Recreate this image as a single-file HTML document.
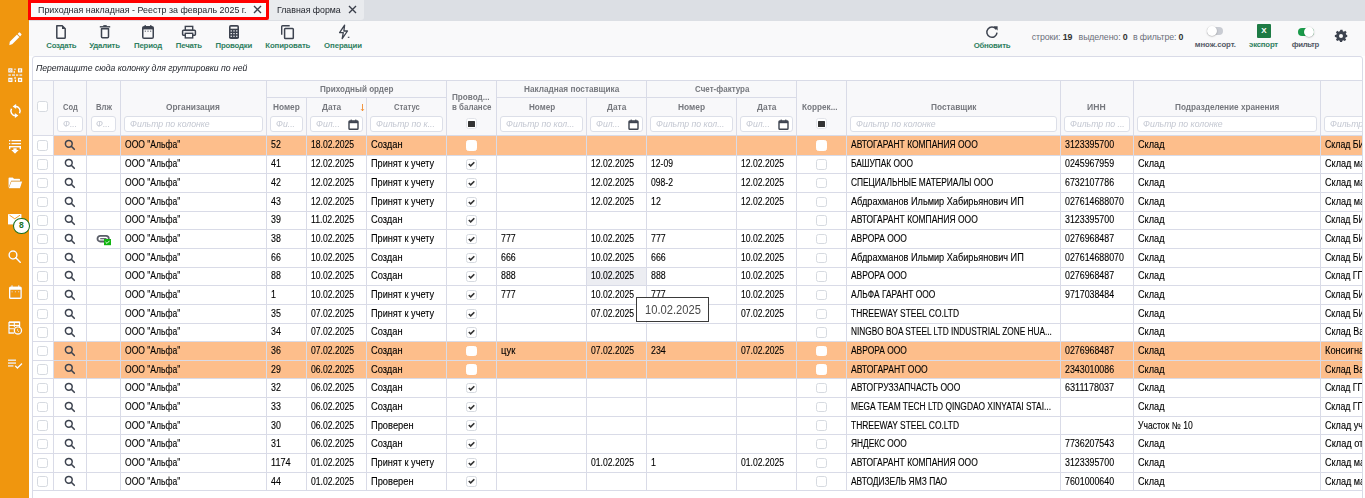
<!DOCTYPE html><html><head><meta charset="utf-8"><style>
*{box-sizing:border-box;margin:0;padding:0}
html,body{width:1365px;height:498px;overflow:hidden;background:#fff;font-family:"Liberation Sans",sans-serif}
.a{position:absolute;white-space:nowrap}
.vl{width:1px;background:#D9DBE7}
.hl{height:1px;background:#D9DBE7}
.c{font-size:10px;color:#000;line-height:18px;-webkit-text-stroke:0.12px #000}
.ht{font-size:8.5px;font-weight:bold;color:#76787E;line-height:10px}
.lbl{font-size:7.8px;font-weight:bold;color:#2F8060;line-height:10px}
.fi{height:15.5px;border:1px solid #DCDFE8;border-radius:3px;background:#fff;overflow:hidden}
.ph{font-size:9.3px;font-style:italic;color:#C3C7D1;line-height:12px;overflow:visible}
.cb{width:10.5px;height:10.5px;border:1px solid #D6DAE0;border-radius:2.5px;background:#fff}
</style></head><body>
<div class="a" style="left:0;top:0;width:29px;height:498px;background:#F0960E"></div>
<div class="a" style="left:29px;top:0;width:1336px;height:21px;background:#DCDFE4"></div>
<div class="a" style="left:269px;top:0;width:95px;height:20px;background:#E9EBEE;border-bottom-right-radius:3px"></div>
<div class="a" style="left:28px;top:0;width:240.5px;height:20px;border:3px solid #FF0000;background:#F9FAFB;border-bottom-right-radius:2px"></div>
<div class="a " style="left:37.5px;top:3.10px;font-size:9.8px;line-height:13px;transform:scaleX(0.9081);transform-origin:0 0;color:#1C1F27;">Приходная накладная - Реестр за февраль 2025 г.</div>
<div class="a " style="left:277.4px;top:3.10px;font-size:9.8px;line-height:13px;transform:scaleX(0.8952);transform-origin:0 0;color:#1C1F27;">Главная форма</div>
<svg class="a" style="left:253.2px;top:4.9px;" width="9" height="9" viewBox="0 0 9 9"><path d="M1 1L8 8M8 1L1 8" stroke="#3A3F4A" stroke-width="1.35"/></svg>
<svg class="a" style="left:348.2px;top:4.9px;" width="9" height="9" viewBox="0 0 9 9"><path d="M1 1L8 8M8 1L1 8" stroke="#3A3F4A" stroke-width="1.35"/></svg>
<div class="a" style="left:29px;top:21px;width:1336px;height:35px;background:#F9F9FA"></div>
<svg class="a" style="left:55px;top:24px;" width="12" height="16" viewBox="0 0 12 16"><path d="M1.8 1.8H7.2L10.2 4.8V13.4Q10.2 14.2 9.4 14.2H2.6Q1.8 14.2 1.8 13.4Z" fill="none" stroke="#3D434F" stroke-width="1.5" stroke-linejoin="round"/><path d="M7 1.5L10.5 5H7Z" fill="#3D434F"/></svg>
<div class="a lbl" style="left:46.3px;top:40.60px;font-size:7.8px;font-weight:bold;line-height:10px;letter-spacing:-0.297px;">Создать</div>
<svg class="a" style="left:99px;top:24px;" width="12" height="16" viewBox="0 0 12 16"><path d="M0.8 2.8H11.2" stroke="#3D434F" stroke-width="1.4"/><path d="M4.3 1.9H7.7" stroke="#3D434F" stroke-width="1.6"/><path d="M2.5 4.8H9.5V12.8Q9.5 13.8 8.5 13.8H3.5Q2.5 13.8 2.5 12.8Z" fill="none" stroke="#3D434F" stroke-width="1.5" stroke-linejoin="round"/></svg>
<div class="a lbl" style="left:89.15px;top:40.60px;font-size:7.8px;font-weight:bold;line-height:10px;letter-spacing:-0.188px;">Удалить</div>
<svg class="a" style="left:141px;top:24px;" width="14" height="16" viewBox="0 0 14 16"><rect x="1.75" y="2.75" width="10.5" height="11.5" rx="1.3" fill="none" stroke="#3D434F" stroke-width="1.5"/><rect x="1.75" y="3" width="10.5" height="2.4" fill="#3D434F"/><path d="M4.2 1V3.5M9.8 1V3.5" stroke="#3D434F" stroke-width="1.2"/><path d="M4.3 6.6V7.8M7 6.6V7.8M9.7 6.6V7.8" stroke="#3D434F" stroke-width="0.9"/></svg>
<div class="a lbl" style="left:134.0px;top:40.60px;font-size:7.8px;font-weight:bold;line-height:10px;letter-spacing:-0.185px;">Период</div>
<svg class="a" style="left:181px;top:24px;" width="16" height="16" viewBox="0 0 16 16"><rect x="4.3" y="2.4" width="7.4" height="4" fill="none" stroke="#3D434F" stroke-width="1.4"/><path d="M4 11.3H2.3Q1.6 11.3 1.6 10.6V7.2Q1.6 6.3 2.5 6.3H13.5Q14.4 6.3 14.4 7.2V10.6Q14.4 11.3 13.7 11.3H12" fill="none" stroke="#3D434F" stroke-width="1.5"/><rect x="4.3" y="9.3" width="7.4" height="4.6" fill="none" stroke="#3D434F" stroke-width="1.4"/></svg>
<div class="a lbl" style="left:175.8px;top:40.60px;font-size:7.8px;font-weight:bold;line-height:10px;letter-spacing:-0.206px;">Печать</div>
<svg class="a" style="left:228px;top:24px;" width="12" height="16" viewBox="0 0 12 16"><rect x="1" y="1" width="10" height="14" rx="1.8" fill="#3D434F"/><rect x="2.6" y="2.7" width="6.8" height="2" fill="#F9F9FA"/><g fill="#F9F9FA"><rect x="2.6" y="6.3" width="1.3" height="1.2"/><rect x="5.35" y="6.3" width="1.3" height="1.2"/><rect x="8.1" y="6.3" width="1.3" height="1.2"/><rect x="2.6" y="9" width="1.3" height="1.2"/><rect x="5.35" y="9" width="1.3" height="1.2"/><rect x="8.1" y="9" width="1.3" height="1.2"/><rect x="2.6" y="11.7" width="1.3" height="1.2"/><rect x="5.35" y="11.7" width="1.3" height="1.2"/><rect x="8.1" y="11.7" width="1.3" height="1.2"/></g></svg>
<div class="a lbl" style="left:215.55px;top:40.60px;font-size:7.8px;font-weight:bold;line-height:10px;letter-spacing:-0.203px;">Проводки</div>
<svg class="a" style="left:280px;top:24px;" width="15" height="16" viewBox="0 0 15 16"><path d="M1.7 10.8V2.5Q1.7 1.7 2.5 1.7H9.7" fill="none" stroke="#3D434F" stroke-width="1.4"/><rect x="4.6" y="4.4" width="8.7" height="10.2" rx="0.8" fill="none" stroke="#3D434F" stroke-width="1.5"/></svg>
<div class="a lbl" style="left:265.35px;top:40.60px;font-size:7.8px;font-weight:bold;line-height:10px;letter-spacing:-0.129px;">Копировать</div>
<svg class="a" style="left:338px;top:24px;" width="12" height="16" viewBox="0 0 12 16"><path d="M6.6 1.2L1.6 8.6H5.3L4.2 14.6L9.5 7H5.9Z" fill="none" stroke="#3D434F" stroke-width="1.3" stroke-linejoin="round"/><path d="M9.8 13.3H11.4" stroke="#3D434F" stroke-width="1.1"/></svg>
<div class="a lbl" style="left:324.05px;top:40.60px;font-size:7.8px;font-weight:bold;line-height:10px;letter-spacing:-0.087px;">Операции</div>
<svg class="a" style="left:985px;top:25px;" width="14" height="14" viewBox="0 0 14 14"><path d="M11.2 4.4A5.1 5.1 0 1 0 12 7.6" fill="none" stroke="#3D434F" stroke-width="1.5"/><path d="M8.4 1.2L12.6 1.2L12.6 5.4Z" fill="#3D434F"/></svg>
<div class="a lbl" style="left:973.7px;top:40.60px;font-size:7.8px;font-weight:bold;line-height:10px;letter-spacing:-0.245px;">Обновить</div>
<div class="a" style="left:1031.8px;top:32px;font-size:8.8px;line-height:10px;color:#6B6F7A;letter-spacing:-0.12px">строки: <b style="color:#333">19</b></div>
<div class="a" style="left:1078.6px;top:32px;font-size:8.8px;line-height:10px;color:#6B6F7A;letter-spacing:-0.12px">выделено: <b style="color:#333">0</b></div>
<div class="a" style="left:1132.9px;top:32px;font-size:8.8px;line-height:10px;color:#6B6F7A;letter-spacing:-0.12px">в фильтре: <b style="color:#333">0</b></div>
<div class="a" style="left:1207px;top:27px;width:16px;height:8px;border-radius:4px;background:#C9CCD3"></div>
<div class="a" style="left:1206.5px;top:26px;width:10px;height:10px;border-radius:5px;background:#fff;box-shadow:0 0.5px 1.5px rgba(0,0,0,0.35)"></div>
<div class="a lbl" style="left:1194.85px;top:39.90px;font-size:7.8px;font-weight:bold;line-height:10px;letter-spacing:-0.099px;color:#555A66;">множ.сорт.</div>
<div class="a" style="left:1257px;top:24px;width:14px;height:14px;background:#1E7B45;border-radius:1px;color:#fff;font-size:8px;font-weight:bold;text-align:center;line-height:14px">X</div>
<div class="a lbl" style="left:1249.05px;top:39.90px;font-size:7.8px;font-weight:bold;line-height:10px;letter-spacing:-0.215px;">экспорт</div>
<div class="a" style="left:1298px;top:27.5px;width:16px;height:8px;border-radius:4px;background:#1A9A4A"></div>
<div class="a" style="left:1304px;top:26.5px;width:10px;height:10px;border-radius:5px;background:#fff;box-shadow:0 0.5px 1.5px rgba(0,0,0,0.35)"></div>
<div class="a lbl" style="left:1291.8500000000001px;top:39.90px;font-size:7.8px;font-weight:bold;line-height:10px;letter-spacing:-0.361px;color:#555A66;">фильтр</div>
<svg class="a" style="left:1334px;top:29px;" width="14" height="14" viewBox="0 0 14 14"><g transform="translate(7 7)"><path d="M-1.1 -6.2H1.1L1.4 -4.6L2.7 -4.1L4 -5.1L5.6 -3.5L4.6 -2.2L5.1 -0.9L6.2 -0.6V1.6L4.6 1.9L4.1 3.2L5.1 4.5L3.5 6.1L2.2 5.1L0.9 5.6L0.6 7.2H-1.6L-1.9 5.6L-3.2 5.1L-4.5 6.1L-6.1 4.5L-5.1 3.2L-5.6 1.9L-7.2 1.6V-0.6L-5.6 -0.9L-5.1 -2.2L-6.1 -3.5L-4.5 -5.1L-3.2 -4.1L-1.9 -4.6Z" fill="#3D434F" transform="translate(0.5 -0.5) scale(0.92)"/><circle cx="0" cy="0" r="2" fill="#F9F9FA"/></g></svg>
<svg class="a" style="left:8px;top:32px;filter:drop-shadow(0.6px 0.8px 0.4px rgba(120,60,0,0.45))" width="15" height="15" viewBox="0 0 15 15"><path d="M1.73 9.73L8.93 2.53L11.47 5.07L4.27 12.27L1.2 13.3Z" fill="#FFFFFF"/><path d="M9.6 1.9L10.9 0.6Q11.4 0.1 11.9 0.6L13.4 2.1Q13.9 2.6 13.4 3.1L12.1 4.4Z" fill="#FFFFFF"/></svg>
<svg class="a" style="left:8px;top:68px;filter:drop-shadow(0.6px 0.8px 0.4px rgba(120,60,0,0.45))" width="15" height="15" viewBox="0 0 15 15"><g fill="none" stroke="#FFFFFF" stroke-width="1.3"><rect x="0.9" y="0.9" width="3" height="3"/><rect x="10.6" y="0.9" width="3" height="3"/><rect x="0.9" y="10.4" width="3" height="3"/><rect x="10.6" y="10.4" width="3" height="3"/></g><g fill="#FFFFFF"><rect x="1.9" y="1.9" width="1" height="1"/><rect x="11.6" y="1.9" width="1" height="1"/><rect x="1.9" y="11.4" width="1" height="1"/><rect x="11.6" y="11.4" width="1" height="1"/><rect x="0.3" y="6.4" width="2.6" height="1.3"/><rect x="4" y="6.4" width="3" height="1.3"/><rect x="8" y="6.4" width="2.4" height="1.3"/><rect x="11.4" y="6.4" width="2.8" height="1.3"/><rect x="6.4" y="0.5" width="1.2" height="1.6"/><rect x="5.6" y="2.9" width="1.2" height="2.4"/><rect x="6.4" y="8.8" width="1.3" height="2.2"/><rect x="6.8" y="11.6" width="1.3" height="2.4"/></g></svg>
<svg class="a" style="left:8.5px;top:104px;filter:drop-shadow(0.6px 0.8px 0.4px rgba(120,60,0,0.45))" width="13" height="14" viewBox="0 0 13 14"><path d="M6.5 2.4A4.6 4.6 0 0 1 10.48 9.3" fill="none" stroke="#FFFFFF" stroke-width="1.6"/><path d="M2.52 4.7A4.6 4.6 0 0 0 6.5 11.6" fill="none" stroke="#FFFFFF" stroke-width="1.6"/><path d="M3.6 2.4L7.2 -0.2V5Z" fill="#FFFFFF"/><path d="M9.4 11.6L5.8 9V14.2Z" fill="#FFFFFF"/></svg>
<svg class="a" style="left:9px;top:140px;filter:drop-shadow(0.6px 0.8px 0.4px rgba(120,60,0,0.45))" width="14" height="14" viewBox="0 0 14 14"><g fill="#FFFFFF"><rect x="0" y="0" width="1.4" height="1.4"/><rect x="2.4" y="0" width="9.6" height="1.4"/><rect x="0" y="3" width="1.4" height="1.4"/><rect x="2.4" y="3" width="9.6" height="1.4"/><path d="M0 6H12V9.2H10.6V7.4H1.4V9.2H0Z"/><path d="M4.3 8.2H7.7V10H9.8L6 13.8L2.2 10H4.3Z"/></g></svg>
<svg class="a" style="left:8px;top:177px;filter:drop-shadow(0.6px 0.8px 0.4px rgba(120,60,0,0.45))" width="15" height="12" viewBox="0 0 15 12"><path d="M0.5 11V1.2Q0.5 0.5 1.2 0.5H4.8L6 1.7H11.2Q12 1.7 12 2.5V3.8H3.2L0.5 11Z" fill="#FFFFFF"/><path d="M3.4 4.6H14.2L12 11.2H0.8Z" fill="#FFFFFF"/></svg>
<svg class="a" style="left:8px;top:214px;filter:drop-shadow(0.6px 0.8px 0.4px rgba(120,60,0,0.45))" width="14" height="11" viewBox="0 0 14 11"><rect x="0" y="0" width="13.5" height="10.5" rx="0.6" fill="#FFFFFF"/><path d="M1.5 1.2L6.75 4.8L12 1.2" fill="none" stroke="#F0960E" stroke-width="0.9"/></svg>
<div class="a" style="left:13px;top:217.5px;width:16.8px;height:16.5px;border-radius:50%;border:1.5px solid #17701F;background:#fff;color:#17701F;font-size:8.5px;font-weight:bold;text-align:center;line-height:13.5px">8</div>
<svg class="a" style="left:8px;top:250px;filter:drop-shadow(0.6px 0.8px 0.4px rgba(120,60,0,0.45))" width="14" height="13" viewBox="0 0 14 13"><circle cx="5" cy="5" r="3.9" fill="none" stroke="#FFFFFF" stroke-width="1.5"/><path d="M7.8 7.8L12.2 12.2" stroke="#FFFFFF" stroke-width="1.6" stroke-linecap="round"/></svg>
<svg class="a" style="left:9px;top:285px;filter:drop-shadow(0.6px 0.8px 0.4px rgba(120,60,0,0.45))" width="13" height="14" viewBox="0 0 13 14"><rect x="0.7" y="2.2" width="11.4" height="11" rx="0.8" fill="none" stroke="#FFFFFF" stroke-width="1.4"/><rect x="0.7" y="2.2" width="11.4" height="2.6" fill="#FFFFFF"/><path d="M3 0.2V2.5M9.8 0.2V2.5" stroke="#FFFFFF" stroke-width="1"/><path d="M3.1 6.3V7.3M6.4 6.3V7.3M9.7 6.3V7.3" stroke="#FFFFFF" stroke-width="0.9"/></svg>
<svg class="a" style="left:8px;top:321px;filter:drop-shadow(0.6px 0.8px 0.4px rgba(120,60,0,0.45))" width="15" height="14" viewBox="0 0 15 14"><path d="M1 1.1H11.6V6.5" fill="none" stroke="#FFFFFF" stroke-width="1.3"/><path d="M1 1V12H6.3" fill="none" stroke="#FFFFFF" stroke-width="1.3"/><rect x="1" y="0.5" width="10.6" height="1.6" fill="#FFFFFF"/><path d="M1 4.4H11.6M1 7.8H6M6.3 1V6.2" stroke="#FFFFFF" stroke-width="1.1"/><circle cx="9.9" cy="9.4" r="3.6" fill="none" stroke="#FFFFFF" stroke-width="1.3"/><path d="M9.6 7.8V9.7L11 10.8" fill="none" stroke="#FFFFFF" stroke-width="0.8"/></svg>
<svg class="a" style="left:8px;top:359px;filter:drop-shadow(0.6px 0.8px 0.4px rgba(120,60,0,0.45))" width="15" height="11" viewBox="0 0 15 11"><g fill="#FFFFFF"><rect x="0" y="0.5" width="8" height="1.3"/><rect x="0" y="3.4" width="8" height="1.3"/><rect x="0" y="6.3" width="5.5" height="1.3"/></g><path d="M7.2 6.8L9.4 9L14 4.4" fill="none" stroke="#FFFFFF" stroke-width="1.4"/></svg>
<div class="a" style="left:32px;top:56px;width:1331px;height:460px;border:1px solid #D9DBE7;border-radius:3px;background:#fff"></div>
<div class="a" style="left:0;top:0;width:1362px;height:498px;overflow:hidden">
<div class="a " style="left:35.7px;top:61.17px;font-size:9.6px;font-style:italic;line-height:13px;transform:scaleX(0.8994);transform-origin:0 0;color:#22252C;">Перетащите сюда колонку для группировки по ней</div>
<div class="a" style="left:33px;top:81px;width:1329px;height:54px;background:#F8F8FA"></div>
<div class="a" style="left:53px;top:136px;width:1309px;height:19px;background:#FDBE8B"></div>
<div class="a hl" style="left:32px;top:155px;width:1331px"></div>
<div class="a hl" style="left:32px;top:173px;width:1331px"></div>
<div class="a hl" style="left:32px;top:192px;width:1331px"></div>
<div class="a hl" style="left:32px;top:211px;width:1331px"></div>
<div class="a hl" style="left:32px;top:229px;width:1331px"></div>
<div class="a hl" style="left:32px;top:248px;width:1331px"></div>
<div class="a hl" style="left:32px;top:267px;width:1331px"></div>
<div class="a" style="left:587px;top:268px;width:59px;height:17px;background:#ECEDF2"></div>
<div class="a hl" style="left:32px;top:285px;width:1331px"></div>
<div class="a hl" style="left:32px;top:304px;width:1331px"></div>
<div class="a hl" style="left:32px;top:323px;width:1331px"></div>
<div class="a hl" style="left:32px;top:341px;width:1331px"></div>
<div class="a" style="left:53px;top:342px;width:1309px;height:18px;background:#FDBE8B"></div>
<div class="a hl" style="left:32px;top:360px;width:1331px"></div>
<div class="a" style="left:53px;top:361px;width:1309px;height:17px;background:#FDBE8B"></div>
<div class="a hl" style="left:32px;top:378px;width:1331px"></div>
<div class="a hl" style="left:32px;top:397px;width:1331px"></div>
<div class="a hl" style="left:32px;top:416px;width:1331px"></div>
<div class="a hl" style="left:32px;top:434px;width:1331px"></div>
<div class="a hl" style="left:32px;top:453px;width:1331px"></div>
<div class="a hl" style="left:32px;top:472px;width:1331px"></div>
<div class="a hl" style="left:32px;top:490px;width:1331px"></div>
<div class="a hl" style="left:32px;top:80px;width:1331px"></div>
<div class="a hl" style="left:266px;top:97px;width:181px"></div>
<div class="a hl" style="left:496px;top:97px;width:301px"></div>
<div class="a hl" style="left:32px;top:135px;width:1331px"></div>
<div class="a vl" style="left:53px;top:80px;height:410px"></div>
<div class="a vl" style="left:86px;top:80px;height:410px"></div>
<div class="a vl" style="left:120px;top:80px;height:410px"></div>
<div class="a vl" style="left:266px;top:80px;height:410px"></div>
<div class="a vl" style="left:306px;top:97px;height:393px"></div>
<div class="a vl" style="left:366px;top:97px;height:393px"></div>
<div class="a vl" style="left:446px;top:80px;height:410px"></div>
<div class="a vl" style="left:496px;top:80px;height:410px"></div>
<div class="a vl" style="left:586px;top:97px;height:393px"></div>
<div class="a vl" style="left:646px;top:80px;height:410px"></div>
<div class="a vl" style="left:736px;top:97px;height:393px"></div>
<div class="a vl" style="left:796px;top:80px;height:410px"></div>
<div class="a vl" style="left:846px;top:80px;height:410px"></div>
<div class="a vl" style="left:1060px;top:80px;height:410px"></div>
<div class="a vl" style="left:1133px;top:80px;height:410px"></div>
<div class="a vl" style="left:1320px;top:80px;height:410px"></div>
<div class="a ht" style="left:62.9px;top:102.25px;transform:scaleX(0.8902);transform-origin:0 0">Сод</div>
<div class="a ht" style="left:95.7px;top:102.25px;transform:scaleX(0.9045);transform-origin:0 0">Влж</div>
<div class="a ht" style="left:166.4px;top:102.25px;transform:scaleX(0.9838);transform-origin:0 0">Организация</div>
<div class="a ht" style="left:320.0px;top:84.05px;transform:scaleX(0.9545);transform-origin:0 0">Приходный ордер</div>
<div class="a ht" style="left:273.4px;top:102.25px;transform:scaleX(0.9768);transform-origin:0 0">Номер</div>
<div class="a ht" style="left:321.9px;top:102.25px;transform:scaleX(0.9752);transform-origin:0 0">Дата</div>
<div class="a ht" style="left:394.1px;top:102.25px;transform:scaleX(0.8968);transform-origin:0 0">Статус</div>
<div class="a ht" style="left:451.9px;top:91.75px;transform:scaleX(0.9599);transform-origin:0 0">Провод...</div>
<div class="a ht" style="left:451.9px;top:102.25px;transform:scaleX(0.9342);transform-origin:0 0">в балансе</div>
<div class="a ht" style="left:524.0px;top:84.05px;transform:scaleX(0.9687);transform-origin:0 0">Накладная поставщика</div>
<div class="a ht" style="left:528.8px;top:102.25px;transform:scaleX(0.9549);transform-origin:0 0">Номер</div>
<div class="a ht" style="left:607.0px;top:102.25px;transform:scaleX(0.9803);transform-origin:0 0">Дата</div>
<div class="a ht" style="left:694.6px;top:84.05px;transform:scaleX(0.9394);transform-origin:0 0">Счет-фактура</div>
<div class="a ht" style="left:678.3px;top:102.25px;transform:scaleX(0.9877);transform-origin:0 0">Номер</div>
<div class="a ht" style="left:757.0px;top:102.25px;transform:scaleX(0.9854);transform-origin:0 0">Дата</div>
<div class="a ht" style="left:802.2px;top:102.25px;transform:scaleX(0.9635);transform-origin:0 0">Коррек...</div>
<div class="a ht" style="left:930.6px;top:102.25px;transform:scaleX(0.9746);transform-origin:0 0">Поставщик</div>
<div class="a ht" style="left:1087.4px;top:102.25px;transform:scaleX(1.0114);transform-origin:0 0">ИНН</div>
<div class="a ht" style="left:1174.6px;top:102.25px;transform:scaleX(0.9635);transform-origin:0 0">Подразделение хранения</div>
<svg class="a" style="left:358.5px;top:103px;" width="7" height="9" viewBox="0 0 7 9"><path d="M3.5 1V7.8M2.1 6.2L3.5 7.8L4.9 6.2" fill="none" stroke="#F08A2C" stroke-width="0.9"/></svg>
<div class="a cb" style="left:37px;top:100.5px;width:11px;height:11px"></div>
<div class="a fi" style="left:57px;top:116px;width:25.5px"></div><div class="a ph" style="left:63px;top:117.78px;transform:scaleX(0.9332);transform-origin:0 0">Ф...</div>
<div class="a fi" style="left:91px;top:116px;width:25px"></div>
<div class="a ph" style="left:96px;top:117.78px;transform:scaleX(0.9332);transform-origin:0 0">Ф...</div>
<div class="a fi" style="left:124px;top:116px;width:138.5px"></div><div class="a ph" style="left:130px;top:117.78px;transform:scaleX(0.9332);transform-origin:0 0">Фильтр по колонке</div>
<div class="a fi" style="left:270px;top:116px;width:32.5px"></div><div class="a ph" style="left:276px;top:117.78px;transform:scaleX(0.9332);transform-origin:0 0">Фи...</div>
<div class="a fi" style="left:310px;top:116px;width:52.5px"></div><div class="a ph" style="left:316px;top:117.78px;transform:scaleX(0.9332);transform-origin:0 0">Фил...</div><svg class="a" style="left:348px;top:118.5px;" width="11" height="11" viewBox="0 0 11 11"><rect x="1" y="2" width="9" height="8.2" rx="0.8" fill="none" stroke="#3D434F" stroke-width="1.4"/><rect x="1" y="2.2" width="9" height="2" fill="#3D434F"/><path d="M3.2 0.5V2.5M7.8 0.5V2.5" stroke="#3D434F" stroke-width="1"/></svg>
<div class="a fi" style="left:370px;top:116px;width:72.5px"></div><div class="a ph" style="left:376px;top:117.78px;transform:scaleX(0.9332);transform-origin:0 0">Фильтр по к...</div>
<div class="a fi" style="left:500px;top:116px;width:82.5px"></div><div class="a ph" style="left:506px;top:117.78px;transform:scaleX(0.9332);transform-origin:0 0">Фильтр по кол...</div>
<div class="a fi" style="left:590px;top:116px;width:52.5px"></div><div class="a ph" style="left:596px;top:117.78px;transform:scaleX(0.9332);transform-origin:0 0">Фил...</div><svg class="a" style="left:628px;top:118.5px;" width="11" height="11" viewBox="0 0 11 11"><rect x="1" y="2" width="9" height="8.2" rx="0.8" fill="none" stroke="#3D434F" stroke-width="1.4"/><rect x="1" y="2.2" width="9" height="2" fill="#3D434F"/><path d="M3.2 0.5V2.5M7.8 0.5V2.5" stroke="#3D434F" stroke-width="1"/></svg>
<div class="a fi" style="left:650px;top:116px;width:82.5px"></div><div class="a ph" style="left:656px;top:117.78px;transform:scaleX(0.9332);transform-origin:0 0">Фильтр по кол...</div>
<div class="a fi" style="left:740px;top:116px;width:52.5px"></div><div class="a ph" style="left:746px;top:117.78px;transform:scaleX(0.9332);transform-origin:0 0">Фил...</div><svg class="a" style="left:778px;top:118.5px;" width="11" height="11" viewBox="0 0 11 11"><rect x="1" y="2" width="9" height="8.2" rx="0.8" fill="none" stroke="#3D434F" stroke-width="1.4"/><rect x="1" y="2.2" width="9" height="2" fill="#3D434F"/><path d="M3.2 0.5V2.5M7.8 0.5V2.5" stroke="#3D434F" stroke-width="1"/></svg>
<div class="a fi" style="left:850px;top:116px;width:206.5px"></div><div class="a ph" style="left:856px;top:117.78px;transform:scaleX(0.9332);transform-origin:0 0">Фильтр по колонке</div>
<div class="a fi" style="left:1064px;top:116px;width:65.5px"></div><div class="a ph" style="left:1070px;top:117.78px;transform:scaleX(0.9332);transform-origin:0 0">Фильтр по ...</div>
<div class="a fi" style="left:1137px;top:116px;width:179.5px"></div><div class="a ph" style="left:1143px;top:117.78px;transform:scaleX(0.9332);transform-origin:0 0">Фильтр по колонке</div>
<div class="a fi" style="left:1324px;top:116px;width:52.5px"></div><div class="a ph" style="left:1330px;top:117.78px;transform:scaleX(0.9332);transform-origin:0 0">Фильтр</div>
<div class="a cb" style="left:466.0px;top:118.3px;width:11px;height:11px;border-color:#E2E4EA"></div>
<div class="a" style="left:468.0px;top:120.6px;width:7px;height:6.8px;background:#333;border-radius:0.5px"></div>
<div class="a cb" style="left:815.5px;top:118.3px;width:11px;height:11px;border-color:#E2E4EA"></div>
<div class="a" style="left:817.5px;top:120.6px;width:7px;height:6.8px;background:#333;border-radius:0.5px"></div>
<div class="a cb" style="left:37.2px;top:140.0px;"></div>
<svg class="a" style="left:64px;top:139.2px;" width="12" height="12" viewBox="0 0 12 12"><circle cx="4.8" cy="4.8" r="3.4" fill="none" stroke="#3D434F" stroke-width="1.5"/><path d="M7.3 7.3L10.3 10.3" stroke="#3D434F" stroke-width="1.6" stroke-linecap="round"/></svg>
<div class="a c" style="left:125px;top:135.98px;transform:scaleX(0.8549);transform-origin:0 0">ООО "Альфа"</div>
<div class="a c" style="left:271px;top:135.98px;transform:scaleX(0.8829);transform-origin:0 0">52</div>
<div class="a c" style="left:311px;top:135.98px;transform:scaleX(0.8602);transform-origin:0 0">18.02.2025</div>
<div class="a c" style="left:371px;top:135.98px;transform:scaleX(0.9314);transform-origin:0 0">Создан</div>
<div class="a cb" style="left:466.3px;top:140.0px;border-color:#fff;"></div>




<div class="a cb" style="left:816px;top:140.0px;border-color:#fff;"></div>
<div class="a c" style="left:851px;top:135.98px;transform:scaleX(0.8465);transform-origin:0 0">АВТОГАРАНТ КОМПАНИЯ ООО</div>
<div class="a c" style="left:1065px;top:135.98px;transform:scaleX(0.8829);transform-origin:0 0">3123395700</div>
<div class="a c" style="left:1138px;top:135.98px;transform:scaleX(0.9145);transform-origin:0 0">Склад</div>
<div class="a c" style="left:1325px;top:135.98px;transform:scaleX(0.8772);transform-origin:0 0">Склад БИ</div>
<div class="a cb" style="left:37.2px;top:159.0px;"></div>
<svg class="a" style="left:64px;top:158.2px;" width="12" height="12" viewBox="0 0 12 12"><circle cx="4.8" cy="4.8" r="3.4" fill="none" stroke="#3D434F" stroke-width="1.5"/><path d="M7.3 7.3L10.3 10.3" stroke="#3D434F" stroke-width="1.6" stroke-linecap="round"/></svg>
<div class="a c" style="left:125px;top:155.03px;transform:scaleX(0.8549);transform-origin:0 0">ООО "Альфа"</div>
<div class="a c" style="left:271px;top:155.03px;transform:scaleX(0.8829);transform-origin:0 0">41</div>
<div class="a c" style="left:311px;top:155.03px;transform:scaleX(0.8602);transform-origin:0 0">12.02.2025</div>
<div class="a c" style="left:371px;top:155.03px;transform:scaleX(0.9156);transform-origin:0 0">Принят к учету</div>
<div class="a cb" style="left:466.3px;top:159.0px;"></div><svg class="a" style="left:467.8px;top:161.0px;" width="7" height="6" viewBox="0 0 7 6"><path d="M0.8 3L2.7 4.9L6.3 1.2" fill="none" stroke="#333" stroke-width="1.6"/></svg>

<div class="a c" style="left:591px;top:155.03px;transform:scaleX(0.8602);transform-origin:0 0">12.02.2025</div>
<div class="a c" style="left:651px;top:155.03px;transform:scaleX(0.8564);transform-origin:0 0">12-09</div>
<div class="a c" style="left:741px;top:155.03px;transform:scaleX(0.8602);transform-origin:0 0">12.02.2025</div>
<div class="a cb" style="left:816px;top:159.0px;"></div>
<div class="a c" style="left:851px;top:155.03px;transform:scaleX(0.8345);transform-origin:0 0">БАШУПАК ООО</div>
<div class="a c" style="left:1065px;top:155.03px;transform:scaleX(0.8829);transform-origin:0 0">0245967959</div>
<div class="a c" style="left:1138px;top:155.03px;transform:scaleX(0.9145);transform-origin:0 0">Склад</div>
<div class="a c" style="left:1325px;top:155.03px;transform:scaleX(0.9086);transform-origin:0 0">Склад ма</div>
<div class="a cb" style="left:37.2px;top:177.5px;"></div>
<svg class="a" style="left:64px;top:176.7px;" width="12" height="12" viewBox="0 0 12 12"><circle cx="4.8" cy="4.8" r="3.4" fill="none" stroke="#3D434F" stroke-width="1.5"/><path d="M7.3 7.3L10.3 10.3" stroke="#3D434F" stroke-width="1.6" stroke-linecap="round"/></svg>
<div class="a c" style="left:125px;top:173.57px;transform:scaleX(0.8549);transform-origin:0 0">ООО "Альфа"</div>
<div class="a c" style="left:271px;top:173.57px;transform:scaleX(0.8829);transform-origin:0 0">42</div>
<div class="a c" style="left:311px;top:173.57px;transform:scaleX(0.8602);transform-origin:0 0">12.02.2025</div>
<div class="a c" style="left:371px;top:173.57px;transform:scaleX(0.9156);transform-origin:0 0">Принят к учету</div>
<div class="a cb" style="left:466.3px;top:177.5px;"></div><svg class="a" style="left:467.8px;top:179.5px;" width="7" height="6" viewBox="0 0 7 6"><path d="M0.8 3L2.7 4.9L6.3 1.2" fill="none" stroke="#333" stroke-width="1.6"/></svg>

<div class="a c" style="left:591px;top:173.57px;transform:scaleX(0.8602);transform-origin:0 0">12.02.2025</div>
<div class="a c" style="left:651px;top:173.57px;transform:scaleX(0.8564);transform-origin:0 0">098-2</div>
<div class="a c" style="left:741px;top:173.57px;transform:scaleX(0.8602);transform-origin:0 0">12.02.2025</div>
<div class="a cb" style="left:816px;top:177.5px;"></div>
<div class="a c" style="left:851px;top:173.57px;transform:scaleX(0.8345);transform-origin:0 0">СПЕЦИАЛЬНЫЕ МАТЕРИАЛЫ ООО</div>
<div class="a c" style="left:1065px;top:173.57px;transform:scaleX(0.8829);transform-origin:0 0">6732107786</div>
<div class="a c" style="left:1138px;top:173.57px;transform:scaleX(0.9145);transform-origin:0 0">Склад</div>
<div class="a c" style="left:1325px;top:173.57px;transform:scaleX(0.9086);transform-origin:0 0">Склад ма</div>
<div class="a cb" style="left:37.2px;top:196.5px;"></div>
<svg class="a" style="left:64px;top:195.7px;" width="12" height="12" viewBox="0 0 12 12"><circle cx="4.8" cy="4.8" r="3.4" fill="none" stroke="#3D434F" stroke-width="1.5"/><path d="M7.3 7.3L10.3 10.3" stroke="#3D434F" stroke-width="1.6" stroke-linecap="round"/></svg>
<div class="a c" style="left:125px;top:192.62px;transform:scaleX(0.8549);transform-origin:0 0">ООО "Альфа"</div>
<div class="a c" style="left:271px;top:192.62px;transform:scaleX(0.8829);transform-origin:0 0">43</div>
<div class="a c" style="left:311px;top:192.62px;transform:scaleX(0.8602);transform-origin:0 0">12.02.2025</div>
<div class="a c" style="left:371px;top:192.62px;transform:scaleX(0.9156);transform-origin:0 0">Принят к учету</div>
<div class="a cb" style="left:466.3px;top:196.5px;"></div><svg class="a" style="left:467.8px;top:198.5px;" width="7" height="6" viewBox="0 0 7 6"><path d="M0.8 3L2.7 4.9L6.3 1.2" fill="none" stroke="#333" stroke-width="1.6"/></svg>

<div class="a c" style="left:591px;top:192.62px;transform:scaleX(0.8602);transform-origin:0 0">12.02.2025</div>
<div class="a c" style="left:651px;top:192.62px;transform:scaleX(0.8829);transform-origin:0 0">12</div>
<div class="a c" style="left:741px;top:192.62px;transform:scaleX(0.8602);transform-origin:0 0">12.02.2025</div>
<div class="a cb" style="left:816px;top:196.5px;"></div>
<div class="a c" style="left:851px;top:192.62px;transform:scaleX(0.9159);transform-origin:0 0">Абдрахманов Ильмир Хабирьянович ИП</div>
<div class="a c" style="left:1065px;top:192.62px;transform:scaleX(0.8829);transform-origin:0 0">027614688070</div>
<div class="a c" style="left:1138px;top:192.62px;transform:scaleX(0.9145);transform-origin:0 0">Склад</div>
<div class="a c" style="left:1325px;top:192.62px;transform:scaleX(0.9086);transform-origin:0 0">Склад ма</div>
<div class="a cb" style="left:37.2px;top:215.0px;"></div>
<svg class="a" style="left:64px;top:214.2px;" width="12" height="12" viewBox="0 0 12 12"><circle cx="4.8" cy="4.8" r="3.4" fill="none" stroke="#3D434F" stroke-width="1.5"/><path d="M7.3 7.3L10.3 10.3" stroke="#3D434F" stroke-width="1.6" stroke-linecap="round"/></svg>
<div class="a c" style="left:125px;top:211.16px;transform:scaleX(0.8549);transform-origin:0 0">ООО "Альфа"</div>
<div class="a c" style="left:271px;top:211.16px;transform:scaleX(0.8829);transform-origin:0 0">39</div>
<div class="a c" style="left:311px;top:211.16px;transform:scaleX(0.8733);transform-origin:0 0">11.02.2025</div>
<div class="a c" style="left:371px;top:211.16px;transform:scaleX(0.9314);transform-origin:0 0">Создан</div>
<div class="a cb" style="left:466.3px;top:215.0px;"></div><svg class="a" style="left:467.8px;top:217.0px;" width="7" height="6" viewBox="0 0 7 6"><path d="M0.8 3L2.7 4.9L6.3 1.2" fill="none" stroke="#333" stroke-width="1.6"/></svg>




<div class="a cb" style="left:816px;top:215.0px;"></div>
<div class="a c" style="left:851px;top:211.16px;transform:scaleX(0.8465);transform-origin:0 0">АВТОГАРАНТ КОМПАНИЯ ООО</div>
<div class="a c" style="left:1065px;top:211.16px;transform:scaleX(0.8829);transform-origin:0 0">3123395700</div>
<div class="a c" style="left:1138px;top:211.16px;transform:scaleX(0.9145);transform-origin:0 0">Склад</div>
<div class="a c" style="left:1325px;top:211.16px;transform:scaleX(0.8772);transform-origin:0 0">Склад БИ</div>
<div class="a cb" style="left:37.2px;top:233.5px;"></div>
<svg class="a" style="left:64px;top:232.7px;" width="12" height="12" viewBox="0 0 12 12"><circle cx="4.8" cy="4.8" r="3.4" fill="none" stroke="#3D434F" stroke-width="1.5"/><path d="M7.3 7.3L10.3 10.3" stroke="#3D434F" stroke-width="1.6" stroke-linecap="round"/></svg>
<svg class="a" style="left:96px;top:235.2px;" width="16" height="11" viewBox="0 0 16 11"><rect x="1.5" y="0.9" width="11.3" height="5.6" rx="2.8" fill="none" stroke="#5A5E68" stroke-width="1.8"/><path d="M4.2 3.7H10.5" stroke="#5A5E68" stroke-width="1.2"/><rect x="8" y="4" width="7" height="6.2" fill="#10B410"/><path d="M9.5 7L11 8.4L13.5 5.8" fill="none" stroke="#fff" stroke-width="0.9"/></svg>
<div class="a c" style="left:125px;top:229.71px;transform:scaleX(0.8549);transform-origin:0 0">ООО "Альфа"</div>
<div class="a c" style="left:271px;top:229.71px;transform:scaleX(0.8829);transform-origin:0 0">38</div>
<div class="a c" style="left:311px;top:229.71px;transform:scaleX(0.8602);transform-origin:0 0">10.02.2025</div>
<div class="a c" style="left:371px;top:229.71px;transform:scaleX(0.9156);transform-origin:0 0">Принят к учету</div>
<div class="a cb" style="left:466.3px;top:233.5px;"></div><svg class="a" style="left:467.8px;top:235.5px;" width="7" height="6" viewBox="0 0 7 6"><path d="M0.8 3L2.7 4.9L6.3 1.2" fill="none" stroke="#333" stroke-width="1.6"/></svg>
<div class="a c" style="left:501px;top:229.71px;transform:scaleX(0.8829);transform-origin:0 0">777</div>
<div class="a c" style="left:591px;top:229.71px;transform:scaleX(0.8602);transform-origin:0 0">10.02.2025</div>
<div class="a c" style="left:651px;top:229.71px;transform:scaleX(0.8829);transform-origin:0 0">777</div>
<div class="a c" style="left:741px;top:229.71px;transform:scaleX(0.8602);transform-origin:0 0">10.02.2025</div>
<div class="a cb" style="left:816px;top:233.5px;"></div>
<div class="a c" style="left:851px;top:229.71px;transform:scaleX(0.8425);transform-origin:0 0">АВРОРА ООО</div>
<div class="a c" style="left:1065px;top:229.71px;transform:scaleX(0.8829);transform-origin:0 0">0276968487</div>
<div class="a c" style="left:1138px;top:229.71px;transform:scaleX(0.9145);transform-origin:0 0">Склад</div>
<div class="a c" style="left:1325px;top:229.71px;transform:scaleX(0.8772);transform-origin:0 0">Склад БИ</div>
<div class="a cb" style="left:37.2px;top:252.5px;"></div>
<svg class="a" style="left:64px;top:251.7px;" width="12" height="12" viewBox="0 0 12 12"><circle cx="4.8" cy="4.8" r="3.4" fill="none" stroke="#3D434F" stroke-width="1.5"/><path d="M7.3 7.3L10.3 10.3" stroke="#3D434F" stroke-width="1.6" stroke-linecap="round"/></svg>
<div class="a c" style="left:125px;top:248.75px;transform:scaleX(0.8549);transform-origin:0 0">ООО "Альфа"</div>
<div class="a c" style="left:271px;top:248.75px;transform:scaleX(0.8829);transform-origin:0 0">66</div>
<div class="a c" style="left:311px;top:248.75px;transform:scaleX(0.8602);transform-origin:0 0">10.02.2025</div>
<div class="a c" style="left:371px;top:248.75px;transform:scaleX(0.9314);transform-origin:0 0">Создан</div>
<div class="a cb" style="left:466.3px;top:252.5px;"></div><svg class="a" style="left:467.8px;top:254.5px;" width="7" height="6" viewBox="0 0 7 6"><path d="M0.8 3L2.7 4.9L6.3 1.2" fill="none" stroke="#333" stroke-width="1.6"/></svg>
<div class="a c" style="left:501px;top:248.75px;transform:scaleX(0.8829);transform-origin:0 0">666</div>
<div class="a c" style="left:591px;top:248.75px;transform:scaleX(0.8602);transform-origin:0 0">10.02.2025</div>
<div class="a c" style="left:651px;top:248.75px;transform:scaleX(0.8829);transform-origin:0 0">666</div>
<div class="a c" style="left:741px;top:248.75px;transform:scaleX(0.8602);transform-origin:0 0">10.02.2025</div>
<div class="a cb" style="left:816px;top:252.5px;"></div>
<div class="a c" style="left:851px;top:248.75px;transform:scaleX(0.9159);transform-origin:0 0">Абдрахманов Ильмир Хабирьянович ИП</div>
<div class="a c" style="left:1065px;top:248.75px;transform:scaleX(0.8829);transform-origin:0 0">027614688070</div>
<div class="a c" style="left:1138px;top:248.75px;transform:scaleX(0.9145);transform-origin:0 0">Склад</div>
<div class="a c" style="left:1325px;top:248.75px;transform:scaleX(0.8772);transform-origin:0 0">Склад БИ</div>
<div class="a cb" style="left:37.2px;top:271.0px;"></div>
<svg class="a" style="left:64px;top:270.2px;" width="12" height="12" viewBox="0 0 12 12"><circle cx="4.8" cy="4.8" r="3.4" fill="none" stroke="#3D434F" stroke-width="1.5"/><path d="M7.3 7.3L10.3 10.3" stroke="#3D434F" stroke-width="1.6" stroke-linecap="round"/></svg>
<div class="a c" style="left:125px;top:267.30px;transform:scaleX(0.8549);transform-origin:0 0">ООО "Альфа"</div>
<div class="a c" style="left:271px;top:267.30px;transform:scaleX(0.8829);transform-origin:0 0">88</div>
<div class="a c" style="left:311px;top:267.30px;transform:scaleX(0.8602);transform-origin:0 0">10.02.2025</div>
<div class="a c" style="left:371px;top:267.30px;transform:scaleX(0.9314);transform-origin:0 0">Создан</div>
<div class="a cb" style="left:466.3px;top:271.0px;"></div><svg class="a" style="left:467.8px;top:273.0px;" width="7" height="6" viewBox="0 0 7 6"><path d="M0.8 3L2.7 4.9L6.3 1.2" fill="none" stroke="#333" stroke-width="1.6"/></svg>
<div class="a c" style="left:501px;top:267.30px;transform:scaleX(0.8829);transform-origin:0 0">888</div>
<div class="a c" style="left:591px;top:267.30px;transform:scaleX(0.8602);transform-origin:0 0">10.02.2025</div>
<div class="a c" style="left:651px;top:267.30px;transform:scaleX(0.8829);transform-origin:0 0">888</div>
<div class="a c" style="left:741px;top:267.30px;transform:scaleX(0.8602);transform-origin:0 0">10.02.2025</div>
<div class="a cb" style="left:816px;top:271.0px;"></div>
<div class="a c" style="left:851px;top:267.30px;transform:scaleX(0.8425);transform-origin:0 0">АВРОРА ООО</div>
<div class="a c" style="left:1065px;top:267.30px;transform:scaleX(0.8829);transform-origin:0 0">0276968487</div>
<div class="a c" style="left:1138px;top:267.30px;transform:scaleX(0.9145);transform-origin:0 0">Склад</div>
<div class="a c" style="left:1325px;top:267.30px;transform:scaleX(0.8781);transform-origin:0 0">Склад ГП</div>
<div class="a cb" style="left:37.2px;top:289.5px;"></div>
<svg class="a" style="left:64px;top:288.7px;" width="12" height="12" viewBox="0 0 12 12"><circle cx="4.8" cy="4.8" r="3.4" fill="none" stroke="#3D434F" stroke-width="1.5"/><path d="M7.3 7.3L10.3 10.3" stroke="#3D434F" stroke-width="1.6" stroke-linecap="round"/></svg>
<div class="a c" style="left:125px;top:285.85px;transform:scaleX(0.8549);transform-origin:0 0">ООО "Альфа"</div>
<div class="a c" style="left:271px;top:285.85px;transform:scaleX(0.8829);transform-origin:0 0">1</div>
<div class="a c" style="left:311px;top:285.85px;transform:scaleX(0.8602);transform-origin:0 0">10.02.2025</div>
<div class="a c" style="left:371px;top:285.85px;transform:scaleX(0.9156);transform-origin:0 0">Принят к учету</div>
<div class="a cb" style="left:466.3px;top:289.5px;"></div><svg class="a" style="left:467.8px;top:291.5px;" width="7" height="6" viewBox="0 0 7 6"><path d="M0.8 3L2.7 4.9L6.3 1.2" fill="none" stroke="#333" stroke-width="1.6"/></svg>
<div class="a c" style="left:501px;top:285.85px;transform:scaleX(0.8829);transform-origin:0 0">777</div>
<div class="a c" style="left:591px;top:285.85px;transform:scaleX(0.8602);transform-origin:0 0">10.02.2025</div>
<div class="a c" style="left:651px;top:285.85px;transform:scaleX(0.8829);transform-origin:0 0">777</div>
<div class="a c" style="left:741px;top:285.85px;transform:scaleX(0.8602);transform-origin:0 0">10.02.2025</div>
<div class="a cb" style="left:816px;top:289.5px;"></div>
<div class="a c" style="left:851px;top:285.85px;transform:scaleX(0.8403);transform-origin:0 0">АЛЬФА ГАРАНТ ООО</div>
<div class="a c" style="left:1065px;top:285.85px;transform:scaleX(0.8829);transform-origin:0 0">9717038484</div>
<div class="a c" style="left:1138px;top:285.85px;transform:scaleX(0.9145);transform-origin:0 0">Склад</div>
<div class="a c" style="left:1325px;top:285.85px;transform:scaleX(0.8772);transform-origin:0 0">Склад БИ</div>
<div class="a cb" style="left:37.2px;top:308.5px;"></div>
<svg class="a" style="left:64px;top:307.7px;" width="12" height="12" viewBox="0 0 12 12"><circle cx="4.8" cy="4.8" r="3.4" fill="none" stroke="#3D434F" stroke-width="1.5"/><path d="M7.3 7.3L10.3 10.3" stroke="#3D434F" stroke-width="1.6" stroke-linecap="round"/></svg>
<div class="a c" style="left:125px;top:304.89px;transform:scaleX(0.8549);transform-origin:0 0">ООО "Альфа"</div>
<div class="a c" style="left:271px;top:304.89px;transform:scaleX(0.8829);transform-origin:0 0">35</div>
<div class="a c" style="left:311px;top:304.89px;transform:scaleX(0.8602);transform-origin:0 0">07.02.2025</div>
<div class="a c" style="left:371px;top:304.89px;transform:scaleX(0.9156);transform-origin:0 0">Принят к учету</div>
<div class="a cb" style="left:466.3px;top:308.5px;"></div><svg class="a" style="left:467.8px;top:310.5px;" width="7" height="6" viewBox="0 0 7 6"><path d="M0.8 3L2.7 4.9L6.3 1.2" fill="none" stroke="#333" stroke-width="1.6"/></svg>

<div class="a c" style="left:591px;top:304.89px;transform:scaleX(0.8602);transform-origin:0 0">07.02.2025</div>

<div class="a c" style="left:741px;top:304.89px;transform:scaleX(0.8602);transform-origin:0 0">07.02.2025</div>
<div class="a cb" style="left:816px;top:308.5px;"></div>
<div class="a c" style="left:851px;top:304.89px;transform:scaleX(0.8434);transform-origin:0 0">THREEWAY STEEL CO.LTD</div>

<div class="a c" style="left:1138px;top:304.89px;transform:scaleX(0.9145);transform-origin:0 0">Склад</div>
<div class="a c" style="left:1325px;top:304.89px;transform:scaleX(0.8772);transform-origin:0 0">Склад БИ</div>
<div class="a cb" style="left:37.2px;top:327.0px;"></div>
<svg class="a" style="left:64px;top:326.2px;" width="12" height="12" viewBox="0 0 12 12"><circle cx="4.8" cy="4.8" r="3.4" fill="none" stroke="#3D434F" stroke-width="1.5"/><path d="M7.3 7.3L10.3 10.3" stroke="#3D434F" stroke-width="1.6" stroke-linecap="round"/></svg>
<div class="a c" style="left:125px;top:323.44px;transform:scaleX(0.8549);transform-origin:0 0">ООО "Альфа"</div>
<div class="a c" style="left:271px;top:323.44px;transform:scaleX(0.8829);transform-origin:0 0">34</div>
<div class="a c" style="left:311px;top:323.44px;transform:scaleX(0.8602);transform-origin:0 0">07.02.2025</div>
<div class="a c" style="left:371px;top:323.44px;transform:scaleX(0.9314);transform-origin:0 0">Создан</div>
<div class="a cb" style="left:466.3px;top:327.0px;"></div><svg class="a" style="left:467.8px;top:329.0px;" width="7" height="6" viewBox="0 0 7 6"><path d="M0.8 3L2.7 4.9L6.3 1.2" fill="none" stroke="#333" stroke-width="1.6"/></svg>




<div class="a cb" style="left:816px;top:327.0px;"></div>
<div class="a c" style="left:851px;top:323.44px;transform:scaleX(0.8287);transform-origin:0 0">NINGBO BOA STEEL LTD INDUSTRIAL ZONE HUA...</div>

<div class="a c" style="left:1138px;top:323.44px;transform:scaleX(0.9145);transform-origin:0 0">Склад</div>
<div class="a c" style="left:1325px;top:323.44px;transform:scaleX(0.8921);transform-origin:0 0">Склад Ва</div>
<div class="a cb" style="left:37.2px;top:345.5px;"></div>
<svg class="a" style="left:64px;top:344.7px;" width="12" height="12" viewBox="0 0 12 12"><circle cx="4.8" cy="4.8" r="3.4" fill="none" stroke="#3D434F" stroke-width="1.5"/><path d="M7.3 7.3L10.3 10.3" stroke="#3D434F" stroke-width="1.6" stroke-linecap="round"/></svg>
<div class="a c" style="left:125px;top:341.98px;transform:scaleX(0.8549);transform-origin:0 0">ООО "Альфа"</div>
<div class="a c" style="left:271px;top:341.98px;transform:scaleX(0.8829);transform-origin:0 0">36</div>
<div class="a c" style="left:311px;top:341.98px;transform:scaleX(0.8602);transform-origin:0 0">07.02.2025</div>
<div class="a c" style="left:371px;top:341.98px;transform:scaleX(0.9314);transform-origin:0 0">Создан</div>
<div class="a cb" style="left:466.3px;top:345.5px;border-color:#fff;"></div>
<div class="a c" style="left:501px;top:341.98px;transform:scaleX(0.9449);transform-origin:0 0">цук</div>
<div class="a c" style="left:591px;top:341.98px;transform:scaleX(0.8602);transform-origin:0 0">07.02.2025</div>
<div class="a c" style="left:651px;top:341.98px;transform:scaleX(0.8829);transform-origin:0 0">234</div>
<div class="a c" style="left:741px;top:341.98px;transform:scaleX(0.8602);transform-origin:0 0">07.02.2025</div>
<div class="a cb" style="left:816px;top:345.5px;border-color:#fff;"></div>
<div class="a c" style="left:851px;top:341.98px;transform:scaleX(0.8425);transform-origin:0 0">АВРОРА ООО</div>
<div class="a c" style="left:1065px;top:341.98px;transform:scaleX(0.8829);transform-origin:0 0">0276968487</div>
<div class="a c" style="left:1138px;top:341.98px;transform:scaleX(0.9145);transform-origin:0 0">Склад</div>
<div class="a c" style="left:1325px;top:341.98px;transform:scaleX(0.9304);transform-origin:0 0">Консигна</div>
<div class="a cb" style="left:37.2px;top:364.0px;"></div>
<svg class="a" style="left:64px;top:363.2px;" width="12" height="12" viewBox="0 0 12 12"><circle cx="4.8" cy="4.8" r="3.4" fill="none" stroke="#3D434F" stroke-width="1.5"/><path d="M7.3 7.3L10.3 10.3" stroke="#3D434F" stroke-width="1.6" stroke-linecap="round"/></svg>
<div class="a c" style="left:125px;top:360.53px;transform:scaleX(0.8549);transform-origin:0 0">ООО "Альфа"</div>
<div class="a c" style="left:271px;top:360.53px;transform:scaleX(0.8829);transform-origin:0 0">29</div>
<div class="a c" style="left:311px;top:360.53px;transform:scaleX(0.8602);transform-origin:0 0">06.02.2025</div>
<div class="a c" style="left:371px;top:360.53px;transform:scaleX(0.9314);transform-origin:0 0">Создан</div>
<div class="a cb" style="left:466.3px;top:364.0px;border-color:#fff;"></div>




<div class="a cb" style="left:816px;top:364.0px;border-color:#fff;"></div>
<div class="a c" style="left:851px;top:360.53px;transform:scaleX(0.8561);transform-origin:0 0">АВТОГАРАНТ ООО</div>
<div class="a c" style="left:1065px;top:360.53px;transform:scaleX(0.8829);transform-origin:0 0">2343010086</div>
<div class="a c" style="left:1138px;top:360.53px;transform:scaleX(0.9145);transform-origin:0 0">Склад</div>
<div class="a c" style="left:1325px;top:360.53px;transform:scaleX(0.8921);transform-origin:0 0">Склад Ва</div>
<div class="a cb" style="left:37.2px;top:382.5px;"></div>
<svg class="a" style="left:64px;top:381.7px;" width="12" height="12" viewBox="0 0 12 12"><circle cx="4.8" cy="4.8" r="3.4" fill="none" stroke="#3D434F" stroke-width="1.5"/><path d="M7.3 7.3L10.3 10.3" stroke="#3D434F" stroke-width="1.6" stroke-linecap="round"/></svg>
<div class="a c" style="left:125px;top:379.07px;transform:scaleX(0.8549);transform-origin:0 0">ООО "Альфа"</div>
<div class="a c" style="left:271px;top:379.07px;transform:scaleX(0.8829);transform-origin:0 0">32</div>
<div class="a c" style="left:311px;top:379.07px;transform:scaleX(0.8602);transform-origin:0 0">06.02.2025</div>
<div class="a c" style="left:371px;top:379.07px;transform:scaleX(0.9314);transform-origin:0 0">Создан</div>
<div class="a cb" style="left:466.3px;top:382.5px;"></div><svg class="a" style="left:467.8px;top:384.5px;" width="7" height="6" viewBox="0 0 7 6"><path d="M0.8 3L2.7 4.9L6.3 1.2" fill="none" stroke="#333" stroke-width="1.6"/></svg>




<div class="a cb" style="left:816px;top:382.5px;"></div>
<div class="a c" style="left:851px;top:379.07px;transform:scaleX(0.8490);transform-origin:0 0">АВТОГРУЗЗАПЧАСТЬ ООО</div>
<div class="a c" style="left:1065px;top:379.07px;transform:scaleX(0.9071);transform-origin:0 0">6311178037</div>
<div class="a c" style="left:1138px;top:379.07px;transform:scaleX(0.9145);transform-origin:0 0">Склад</div>
<div class="a c" style="left:1325px;top:379.07px;transform:scaleX(0.8781);transform-origin:0 0">Склад ГП</div>
<div class="a cb" style="left:37.2px;top:401.5px;"></div>
<svg class="a" style="left:64px;top:400.7px;" width="12" height="12" viewBox="0 0 12 12"><circle cx="4.8" cy="4.8" r="3.4" fill="none" stroke="#3D434F" stroke-width="1.5"/><path d="M7.3 7.3L10.3 10.3" stroke="#3D434F" stroke-width="1.6" stroke-linecap="round"/></svg>
<div class="a c" style="left:125px;top:398.12px;transform:scaleX(0.8549);transform-origin:0 0">ООО "Альфа"</div>
<div class="a c" style="left:271px;top:398.12px;transform:scaleX(0.8829);transform-origin:0 0">33</div>
<div class="a c" style="left:311px;top:398.12px;transform:scaleX(0.8602);transform-origin:0 0">06.02.2025</div>
<div class="a c" style="left:371px;top:398.12px;transform:scaleX(0.9314);transform-origin:0 0">Создан</div>
<div class="a cb" style="left:466.3px;top:401.5px;"></div><svg class="a" style="left:467.8px;top:403.5px;" width="7" height="6" viewBox="0 0 7 6"><path d="M0.8 3L2.7 4.9L6.3 1.2" fill="none" stroke="#333" stroke-width="1.6"/></svg>




<div class="a cb" style="left:816px;top:401.5px;"></div>
<div class="a c" style="left:851px;top:398.12px;transform:scaleX(0.8376);transform-origin:0 0">MEGA TEAM TECH LTD QINGDAO XINYATAI STAI...</div>

<div class="a c" style="left:1138px;top:398.12px;transform:scaleX(0.9145);transform-origin:0 0">Склад</div>
<div class="a c" style="left:1325px;top:398.12px;transform:scaleX(0.8781);transform-origin:0 0">Склад ГП</div>
<div class="a cb" style="left:37.2px;top:420.0px;"></div>
<svg class="a" style="left:64px;top:419.2px;" width="12" height="12" viewBox="0 0 12 12"><circle cx="4.8" cy="4.8" r="3.4" fill="none" stroke="#3D434F" stroke-width="1.5"/><path d="M7.3 7.3L10.3 10.3" stroke="#3D434F" stroke-width="1.6" stroke-linecap="round"/></svg>
<div class="a c" style="left:125px;top:416.66px;transform:scaleX(0.8549);transform-origin:0 0">ООО "Альфа"</div>
<div class="a c" style="left:271px;top:416.66px;transform:scaleX(0.8829);transform-origin:0 0">30</div>
<div class="a c" style="left:311px;top:416.66px;transform:scaleX(0.8602);transform-origin:0 0">06.02.2025</div>
<div class="a c" style="left:371px;top:416.66px;transform:scaleX(0.9308);transform-origin:0 0">Проверен</div>
<div class="a cb" style="left:466.3px;top:420.0px;"></div><svg class="a" style="left:467.8px;top:422.0px;" width="7" height="6" viewBox="0 0 7 6"><path d="M0.8 3L2.7 4.9L6.3 1.2" fill="none" stroke="#333" stroke-width="1.6"/></svg>




<div class="a cb" style="left:816px;top:420.0px;"></div>
<div class="a c" style="left:851px;top:416.66px;transform:scaleX(0.8434);transform-origin:0 0">THREEWAY STEEL CO.LTD</div>

<div class="a c" style="left:1138px;top:416.66px;transform:scaleX(0.8576);transform-origin:0 0">Участок № 10</div>
<div class="a c" style="left:1325px;top:416.66px;transform:scaleX(0.9065);transform-origin:0 0">Склад уч</div>
<div class="a cb" style="left:37.2px;top:438.5px;"></div>
<svg class="a" style="left:64px;top:437.7px;" width="12" height="12" viewBox="0 0 12 12"><circle cx="4.8" cy="4.8" r="3.4" fill="none" stroke="#3D434F" stroke-width="1.5"/><path d="M7.3 7.3L10.3 10.3" stroke="#3D434F" stroke-width="1.6" stroke-linecap="round"/></svg>
<div class="a c" style="left:125px;top:435.21px;transform:scaleX(0.8549);transform-origin:0 0">ООО "Альфа"</div>
<div class="a c" style="left:271px;top:435.21px;transform:scaleX(0.8829);transform-origin:0 0">31</div>
<div class="a c" style="left:311px;top:435.21px;transform:scaleX(0.8602);transform-origin:0 0">06.02.2025</div>
<div class="a c" style="left:371px;top:435.21px;transform:scaleX(0.9314);transform-origin:0 0">Создан</div>
<div class="a cb" style="left:466.3px;top:438.5px;"></div><svg class="a" style="left:467.8px;top:440.5px;" width="7" height="6" viewBox="0 0 7 6"><path d="M0.8 3L2.7 4.9L6.3 1.2" fill="none" stroke="#333" stroke-width="1.6"/></svg>




<div class="a cb" style="left:816px;top:438.5px;"></div>
<div class="a c" style="left:851px;top:435.21px;transform:scaleX(0.8328);transform-origin:0 0">ЯНДЕКС ООО</div>
<div class="a c" style="left:1065px;top:435.21px;transform:scaleX(0.8829);transform-origin:0 0">7736207543</div>
<div class="a c" style="left:1138px;top:435.21px;transform:scaleX(0.9145);transform-origin:0 0">Склад</div>
<div class="a c" style="left:1325px;top:435.21px;transform:scaleX(0.9198);transform-origin:0 0">Склад от,</div>
<div class="a cb" style="left:37.2px;top:457.5px;"></div>
<svg class="a" style="left:64px;top:456.7px;" width="12" height="12" viewBox="0 0 12 12"><circle cx="4.8" cy="4.8" r="3.4" fill="none" stroke="#3D434F" stroke-width="1.5"/><path d="M7.3 7.3L10.3 10.3" stroke="#3D434F" stroke-width="1.6" stroke-linecap="round"/></svg>
<div class="a c" style="left:125px;top:454.25px;transform:scaleX(0.8549);transform-origin:0 0">ООО "Альфа"</div>
<div class="a c" style="left:271px;top:454.25px;transform:scaleX(0.9131);transform-origin:0 0">1174</div>
<div class="a c" style="left:311px;top:454.25px;transform:scaleX(0.8602);transform-origin:0 0">01.02.2025</div>
<div class="a c" style="left:371px;top:454.25px;transform:scaleX(0.9156);transform-origin:0 0">Принят к учету</div>
<div class="a cb" style="left:466.3px;top:457.5px;"></div><svg class="a" style="left:467.8px;top:459.5px;" width="7" height="6" viewBox="0 0 7 6"><path d="M0.8 3L2.7 4.9L6.3 1.2" fill="none" stroke="#333" stroke-width="1.6"/></svg>

<div class="a c" style="left:591px;top:454.25px;transform:scaleX(0.8602);transform-origin:0 0">01.02.2025</div>
<div class="a c" style="left:651px;top:454.25px;transform:scaleX(0.8829);transform-origin:0 0">1</div>
<div class="a c" style="left:741px;top:454.25px;transform:scaleX(0.8602);transform-origin:0 0">01.02.2025</div>
<div class="a cb" style="left:816px;top:457.5px;"></div>
<div class="a c" style="left:851px;top:454.25px;transform:scaleX(0.8465);transform-origin:0 0">АВТОГАРАНТ КОМПАНИЯ ООО</div>
<div class="a c" style="left:1065px;top:454.25px;transform:scaleX(0.8829);transform-origin:0 0">3123395700</div>
<div class="a c" style="left:1138px;top:454.25px;transform:scaleX(0.9145);transform-origin:0 0">Склад</div>
<div class="a c" style="left:1325px;top:454.25px;transform:scaleX(0.9086);transform-origin:0 0">Склад ма</div>
<div class="a cb" style="left:37.2px;top:476.0px;"></div>
<svg class="a" style="left:64px;top:475.2px;" width="12" height="12" viewBox="0 0 12 12"><circle cx="4.8" cy="4.8" r="3.4" fill="none" stroke="#3D434F" stroke-width="1.5"/><path d="M7.3 7.3L10.3 10.3" stroke="#3D434F" stroke-width="1.6" stroke-linecap="round"/></svg>
<div class="a c" style="left:125px;top:472.80px;transform:scaleX(0.8549);transform-origin:0 0">ООО "Альфа"</div>
<div class="a c" style="left:271px;top:472.80px;transform:scaleX(0.8829);transform-origin:0 0">44</div>
<div class="a c" style="left:311px;top:472.80px;transform:scaleX(0.8602);transform-origin:0 0">01.02.2025</div>
<div class="a c" style="left:371px;top:472.80px;transform:scaleX(0.9308);transform-origin:0 0">Проверен</div>
<div class="a cb" style="left:466.3px;top:476.0px;"></div><svg class="a" style="left:467.8px;top:478.0px;" width="7" height="6" viewBox="0 0 7 6"><path d="M0.8 3L2.7 4.9L6.3 1.2" fill="none" stroke="#333" stroke-width="1.6"/></svg>




<div class="a cb" style="left:816px;top:476.0px;"></div>
<div class="a c" style="left:851px;top:472.80px;transform:scaleX(0.8417);transform-origin:0 0">АВТОДИЗЕЛЬ ЯМЗ ПАО</div>
<div class="a c" style="left:1065px;top:472.80px;transform:scaleX(0.8829);transform-origin:0 0">7601000640</div>
<div class="a c" style="left:1138px;top:472.80px;transform:scaleX(0.9145);transform-origin:0 0">Склад</div>
<div class="a c" style="left:1325px;top:472.80px;transform:scaleX(0.9086);transform-origin:0 0">Склад ма</div>
</div>
<div class="a vl" style="left:1362px;top:60px;height:440px"></div>
<div class="a" style="left:636px;top:297px;width:73px;height:25px;background:#fff;border:1px solid #3A3A3A;font-size:12.6px;color:#5A5A5A;line-height:23px;padding-left:8.5px"></div>
<div class="a" style="left:644.7px;top:301.63px;font-size:12.6px;line-height:16px;color:#4A4A4A;transform:scaleX(0.888);transform-origin:0 0">10.02.2025</div>
</body></html>
